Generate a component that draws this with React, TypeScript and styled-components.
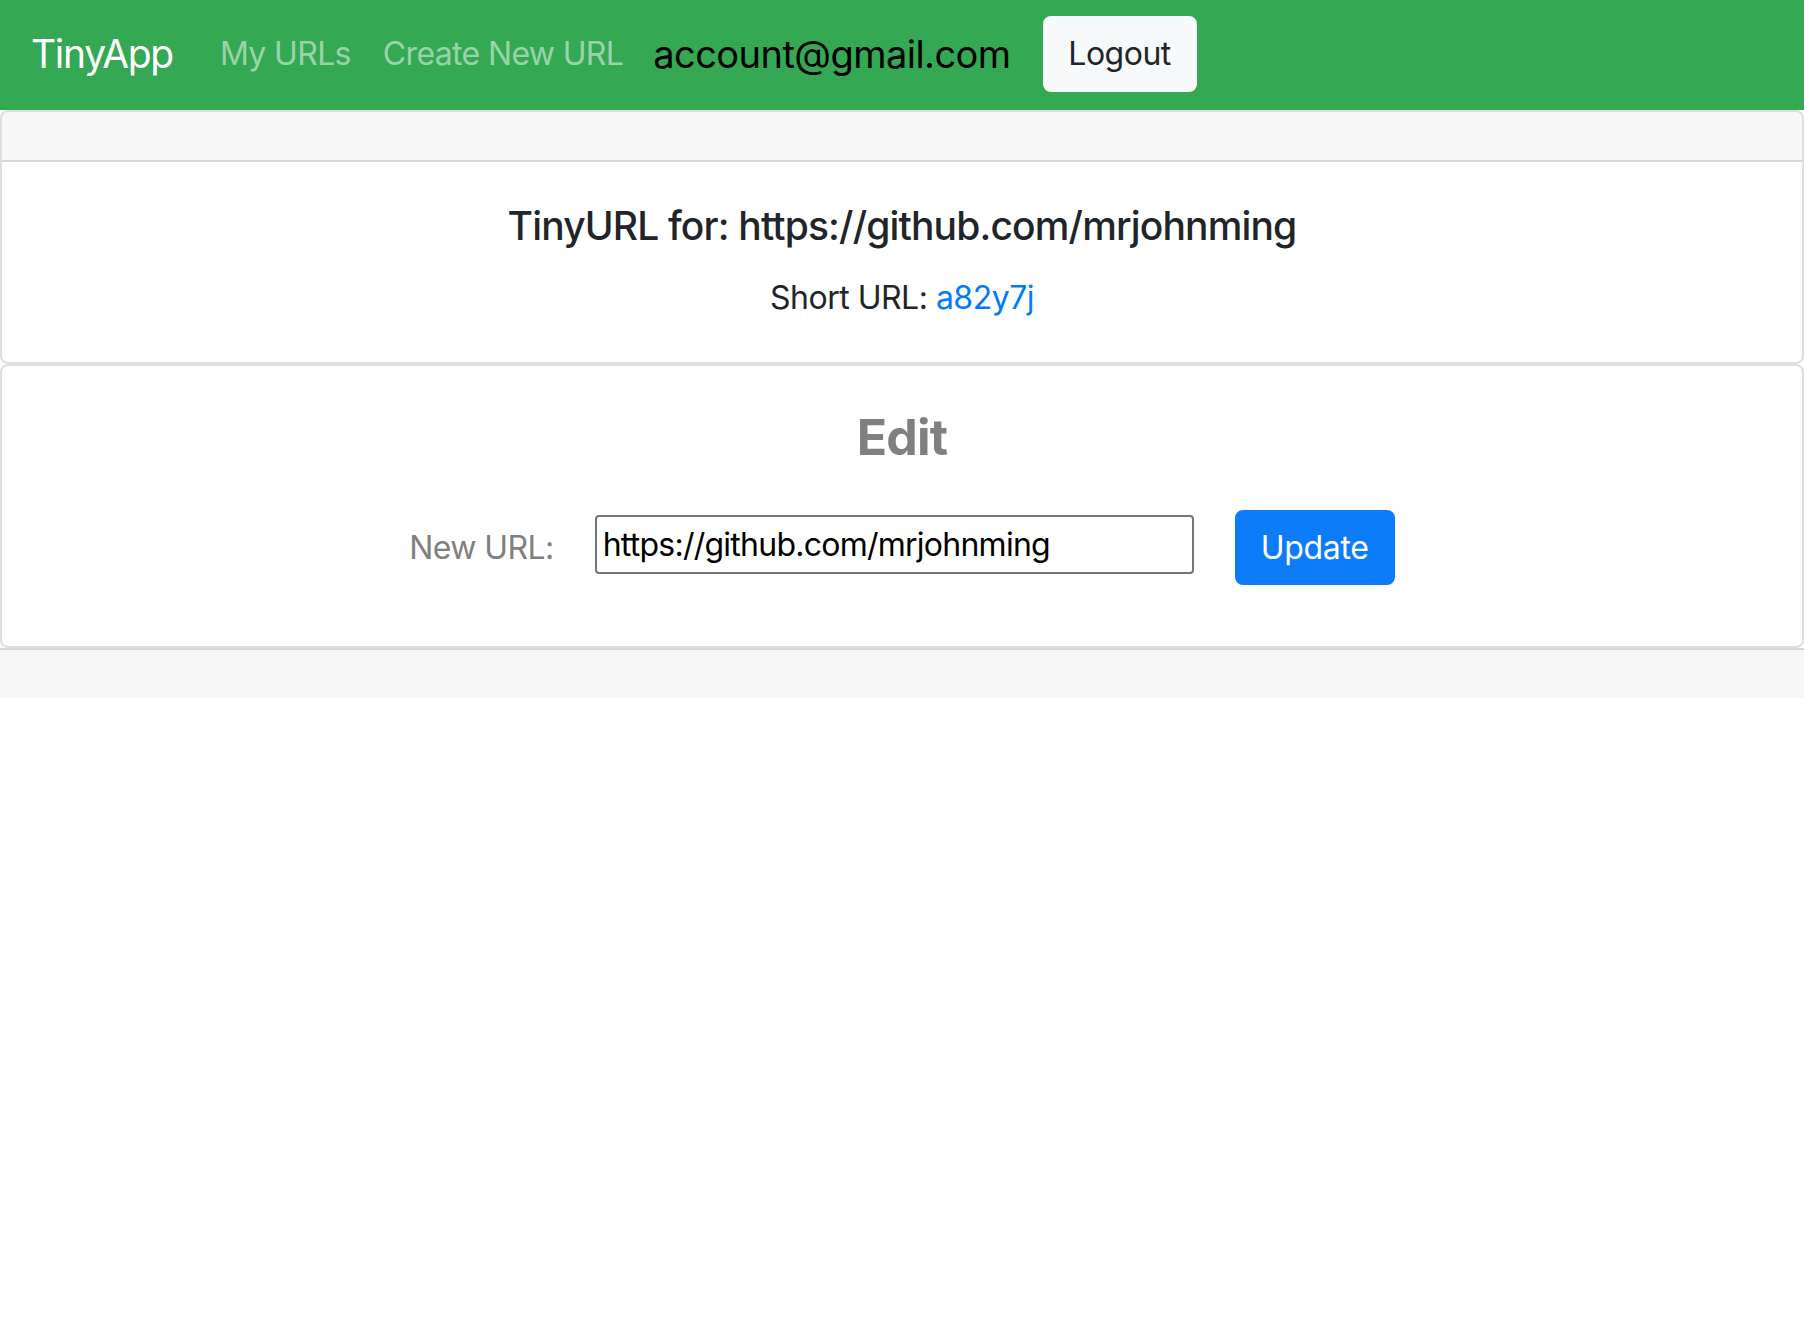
import React from "react";
import styled, { createGlobalStyle } from "styled-components";

const Global = createGlobalStyle`
  html, body { margin: 0; padding: 0; background: #ffffff; }
  body {
    font-family: Inter, "Noto Sans", "Liberation Sans", sans-serif;
    color: #212529;
  }
  * { box-sizing: border-box; }
`;

const Navbar = styled.nav`
  height: 110px;
  background: #34a853;
  display: flex;
  align-items: center;
  padding: 0 32px 2px 31px;
`;

const Brand = styled.a`
  font-size: 39px;
  letter-spacing: -1.3px;
  line-height: 1.5;
  color: #ffffff;
  text-decoration: none;
  margin-right: 31px;
`;

const NavLink = styled.a`
  font-size: 32px;
  letter-spacing: -0.65px;
  line-height: 1.5;
  color: rgba(255, 255, 255, 0.5);
  text-decoration: none;
  padding: 0 16px;
`;

const Account = styled.span`
  font-size: 38px;
  letter-spacing: -0.55px;
  line-height: 1.5;
  color: #000000;
  margin: 0 16px 0 14px;
`;

const LightButton = styled.button`
  font-family: inherit;
  font-size: 32px;
  letter-spacing: -0.5px;
  line-height: 48px;
  height: 76px;
  width: 154px;
  padding: 12px 0;
  border: 2px solid #f8f9fa;
  border-radius: 8px;
  background: #f8f9fa;
  color: #212529;
  margin-left: 16px;
`;

const Card = styled.section`
  border: 2px solid rgba(0, 0, 0, 0.125);
  border-radius: 8px;
  background: #ffffff;
  overflow: hidden;
`;

const CardHeader = styled.div`
  height: 50px;
  background: rgba(0, 0, 0, 0.03);
  border-bottom: 2px solid rgba(0, 0, 0, 0.125);
`;

const CardBody = styled.div`
  padding: 40px;
  text-align: center;
`;

const CardTitle = styled.h5`
  margin: 0 0 24px;
  font-size: 39px;
  letter-spacing: -0.85px;
  font-weight: 500;
  line-height: 48px;
  color: #212529;
`;

const CardText = styled.p`
  margin: 0;
  font-size: 32px;
  letter-spacing: -0.5px;
  line-height: 48px;
  color: #212529;
`;

const ShortLink = styled.a`
  color: #007bff;
  text-decoration: none;
`;

const EditTitle = styled.h3`
  margin: 0;
  font-size: 50px;
  letter-spacing: -0.8px;
  font-weight: 700;
  line-height: 62px;
  color: #808080;
`;

const FormRow = styled.form`
  display: flex;
  align-items: center;
  justify-content: center;
  gap: 41px;
  margin: 42px 0 21px;
`;

const Label = styled.label`
  font-size: 32px;
  letter-spacing: -0.6px;
  line-height: 48px;
  color: #808080;
`;

const Input = styled.input`
  width: 599px;
  height: 59px;
  font-family: inherit;
  font-size: 32px;
  letter-spacing: -0.75px;
  color: #000000;
  padding: 0 6px;
  border: 2px solid #767676;
  border-radius: 4px;
  margin-top: -6px;
  outline: none;
`;

const PrimaryButton = styled.button`
  font-family: inherit;
  font-size: 32px;
  letter-spacing: -0.3px;
  line-height: 48px;
  height: 75px;
  width: 160px;
  padding: 12px 0;
  border: 2px solid #0d7cf9;
  border-radius: 8px;
  background: #0d7cf9;
  color: #ffffff;
`;

const Footer = styled.footer`
  height: 50px;
  background: #f7f7f7;
  border-top: 2px solid rgba(0, 0, 0, 0.125);
`;

export default function App() {
  return (
    <>
      <Global />
      <Navbar>
        <Brand href="#">TinyApp</Brand>
        <NavLink href="#">My URLs</NavLink>
        <NavLink href="#">Create New URL</NavLink>
        <Account>account@gmail.com</Account>
        <LightButton type="button">Logout</LightButton>
      </Navbar>
      <Card>
        <CardHeader />
        <CardBody>
          <CardTitle>TinyURL for: https://github.com/mrjohnming</CardTitle>
          <CardText>
            Short URL: <ShortLink href="#">a82y7j</ShortLink>
          </CardText>
        </CardBody>
      </Card>
      <Card>
        <CardBody>
          <EditTitle>Edit</EditTitle>
          <FormRow onSubmit={(e) => e.preventDefault()}>
            <Label htmlFor="longURL">New URL:</Label>
            <Input id="longURL" type="text" defaultValue="https://github.com/mrjohnming" />
            <PrimaryButton type="submit">Update</PrimaryButton>
          </FormRow>
        </CardBody>
      </Card>
      <Footer />
    </>
  );
}
